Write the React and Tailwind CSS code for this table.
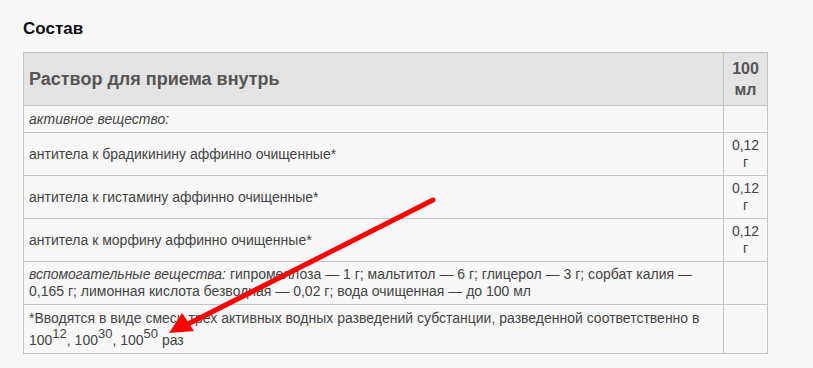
const rows = [
  { name: 'антитела к брадикинину аффинно очищенные*', value: '0,12 г' },
  { name: 'антитела к гистамину аффинно очищенные*', value: '0,12 г' },
  { name: 'антитела к морфину аффинно очищенные*', value: '0,12 г' },
];

const cell = 'border border-[#c4c4c4] px-[5px] align-middle';
const sup = 'top-[-7px] text-[13px]';

const App = () => {
  return (
    <div className="relative min-h-screen bg-[#f7f7f7] pl-[23px] pt-[19px] font-['Liberation_Sans',Arial,sans-serif] text-[#444]">
      <h2 className="text-[17px] font-bold leading-[20px] text-[#111]">Состав</h2>

      <table className="mt-[13px] w-[745px] border-collapse text-[14px] leading-[17px]">
        <thead>
          <tr className="h-[53px] bg-[#e3e3e3]">
            <th className={`${cell} text-left text-[18px] font-bold text-[#555]`}>
              Раствор для приема внутрь
            </th>
            <th className={`${cell} w-[44px] text-center text-[16px] font-bold leading-[21px] text-[#555]`}>
              100 мл
            </th>
          </tr>
        </thead>
        <tbody>
          <tr className="h-[27px]">
            <td className={`${cell} italic`}>активное вещество:</td>
            <td className={cell}></td>
          </tr>
          {rows.map((row, index) => (
            <tr key={index} className="h-[43px]">
              <td className={cell}>{row.name}</td>
              <td className={`${cell} text-center`}>{row.value}</td>
            </tr>
          ))}
          <tr className="h-[43px]">
            <td className={cell}>
              <i>вспомогательные вещества:</i> гипромеллоза — 1 г; мальтитол — 6 г; глицерол — 3 г; сорбат калия — 0,165 г; лимонная кислота безводная — 0,02 г; вода очищенная — до 100 мл
            </td>
            <td className={cell}></td>
          </tr>
          <tr className="h-[49px]">
            <td className={`${cell} leading-[22px]`}>
              *Вводятся в виде смеси трех активных водных разведений субстанции, разведенной соответственно в 100<sup className={sup}>12</sup>, 100<sup className={sup}>30</sup>, 100<sup className={sup}>50</sup> раз
            </td>
            <td className={cell}></td>
          </tr>
        </tbody>
      </table>

      <svg className="pointer-events-none absolute left-0 top-0" width="813" height="368">
        <line x1="433" y1="200" x2="186" y2="325" stroke="#ff0000" strokeWidth="5" strokeLinecap="round" />
        <polygon points="169,333 182,313 194,331" fill="#ff0000" />
      </svg>
    </div>
  );
};

export default App;
